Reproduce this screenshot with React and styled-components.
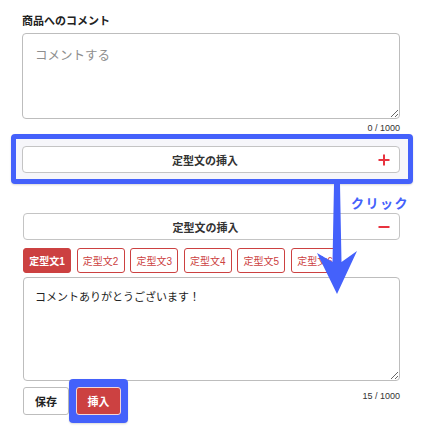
import React from "react";
import styled, { createGlobalStyle } from "styled-components";

const Global = createGlobalStyle`
  html, body { margin: 0; padding: 0; background: #fff; }
  body { font-family: "Liberation Sans", "Noto Sans CJK JP", sans-serif; color: #222; }
  * { box-sizing: border-box; }
`;

const BLUE = "#4461fb";
const RED = "#cc4141";

const Page = styled.div`
  position: relative;
  width: 424px;
  height: 432px;
  padding: 12px 24px 0 22px;
  display: flex;
  flex-direction: column;
`;

const Label = styled.div`
  font-family: "Noto Sans CJK JP", sans-serif;
  font-size: 11px;
  font-weight: 700;
  line-height: 16px;
  color: #222;
  margin-bottom: 5px;
`;

const TextArea = styled.textarea`
  display: block;
  width: 100%;
  height: ${(p) => p.$h}px;
  border: 1px solid #bdbdbd;
  border-radius: 4px;
  padding: ${(p) => p.$pad};
  font-family: "Noto Sans CJK JP", sans-serif;
  font-size: ${(p) => p.$fs}px;
  line-height: 18px;
  color: #222;
  resize: vertical;
  outline: none;
  &::placeholder { color: #8e8e8e; }
`;

const Counter = styled.div`
  font-size: 9px;
  line-height: 14px;
  color: #333;
  text-align: right;
  margin-top: ${(p) => p.$mt || 0}px;
`;

const Highlight = styled.div`
  position: relative;
  z-index: 0;
  &::before {
    content: "";
    position: absolute;
    z-index: -1;
    top: ${(p) => p.$t}px;
    bottom: ${(p) => p.$b}px;
    left: ${(p) => p.$l}px;
    right: ${(p) => p.$r}px;
    border: ${(p) => (p.$solid ? "none" : `5px solid ${BLUE}`)};
    background: ${(p) => (p.$solid ? BLUE : "#f6f6fa")};
    border-radius: 4px;
    box-shadow: 0 1px 2px rgba(0,0,0,0.15);
  }
`;

const ToggleButton = styled.div`
  position: relative;
  height: 27px;
  border: 1px solid #c4c4c4;
  border-radius: 4px;
  background: #fff;
  display: flex;
  align-items: center;
  justify-content: center;
  padding-right: 12px;
  font-family: "Noto Sans CJK JP", sans-serif;
  font-size: 11px;
  font-weight: 700;
  color: #333;
  margin-top: ${(p) => p.$mt || 0}px;
`;

const Sign = styled.svg`
  position: absolute;
  right: 9px;
  top: 50%;
  transform: translateY(-50%);
`;

const Tabs = styled.div`
  display: flex;
  gap: 5.6px;
  margin-top: 8px;
  padding-left: 1px;
`;

const Tab = styled.div`
  width: 48px;
  height: 25px;
  border: 1px solid ${RED};
  border-radius: 3px;
  background: ${(p) => (p.$active ? RED : "#fff")};
  color: ${(p) => (p.$active ? "#fff" : RED)};
  font-family: "Liberation Sans", "Noto Sans CJK JP", sans-serif;
  font-size: 10px;
  font-weight: ${(p) => (p.$active ? 700 : 400)};
  display: flex;
  align-items: center;
  justify-content: center;
`;

const Area2Wrap = styled.div`
  margin-top: 4px;
  padding-left: 1px;
`;

const BottomRow = styled.div`
  display: flex;
  align-items: flex-start;
  gap: 7px;
  margin-top: 6px;
  padding-left: 1px;
`;

const Btn = styled.div`
  width: ${(p) => p.$w}px;
  height: 28px;
  border-radius: 3px;
  border: 1px solid ${(p) => (p.$primary ? "#f3d6d6" : "#bdbdbd")};
  background: ${(p) => (p.$primary ? RED : "#fff")};
  color: ${(p) => (p.$primary ? "#fff" : "#222")};
  font-family: "Noto Sans CJK JP", sans-serif;
  font-size: 11px;
  font-weight: 700;
  display: flex;
  align-items: center;
  justify-content: center;
`;

const Spacer = styled.div`
  flex: 1;
`;

const ClickLabel = styled.div`
  position: absolute;
  left: 351px;
  top: 193px;
  font-family: "Noto Sans CJK JP", sans-serif;
  font-size: 13px;
  font-weight: 700;
  letter-spacing: 1.5px;
  color: ${BLUE};
`;

const Arrow = styled.svg`
  position: absolute;
  left: 0;
  top: 0;
  pointer-events: none;
`;

export default function App() {
  return (
    <>
      <Global />
      <Page>
        <Label>商品へのコメント</Label>
        <TextArea $h={86} $fs={12.5} $pad="12px 12px" placeholder="コメントする" />
        <Counter $mt={2}>0 / 1000</Counter>

        <Highlight $t={-12} $b={-11} $l={-11} $r={-13} style={{ marginTop: 11 }}>
          <ToggleButton>
            定型文の挿入
            <Sign width="12" height="12" viewBox="0 0 12 12">
              <path d="M6 0.5V11.5M0.5 6H11.5" stroke="#e8333f" strokeWidth="2" />
            </Sign>
          </ToggleButton>
        </Highlight>

        <ToggleButton $mt={40} style={{ marginLeft: 1 }}>
          定型文の挿入
          <Sign width="12" height="12" viewBox="0 0 12 12">
            <path d="M0.5 6H11.5" stroke="#e8333f" strokeWidth="2" />
          </Sign>
        </ToggleButton>

        <Tabs>
          {[1, 2, 3, 4, 5, 6].map((n) => (
            <Tab key={n} $active={n === 1}>定型文{n}</Tab>
          ))}
        </Tabs>

        <Area2Wrap>
          <TextArea $h={104} $fs={11} $pad="9px 11px" defaultValue="コメントありがとうございます！" />
        </Area2Wrap>

        <BottomRow>
          <Btn $w={46}>保存</Btn>
          <Highlight $solid $t={-8} $b={-8} $l={-7} $r={-7}>
            <Btn $w={45} $primary>挿入</Btn>
          </Highlight>
          <Spacer />
          <Counter $mt={2}>15 / 1000</Counter>
        </BottomRow>

        <ClickLabel>クリック</ClickLabel>
        <Arrow width="424" height="432" viewBox="0 0 424 432">
          <polygon
            points="334,184 340,184 341.5,262 357,251 337,294 317,253 332.5,262"
            fill={BLUE}
          />
        </Arrow>
      </Page>
    </>
  );
}
